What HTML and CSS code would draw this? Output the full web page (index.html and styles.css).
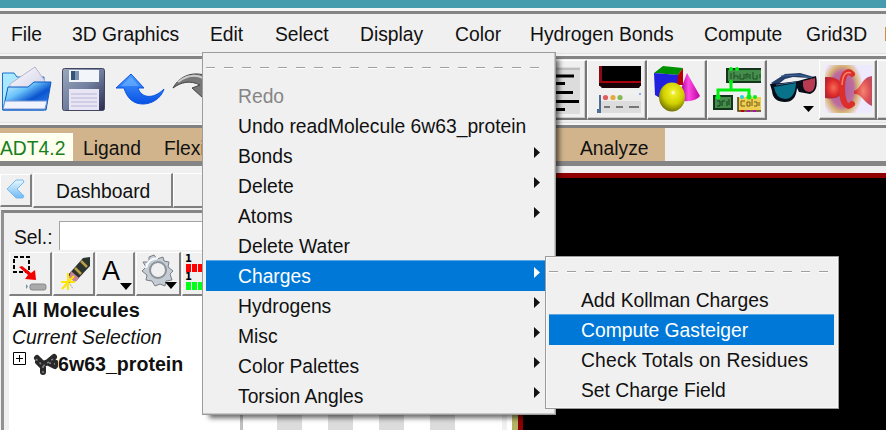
FILE: index.html
```html
<!DOCTYPE html>
<html lang="en">
<head>
<meta charset="utf-8">
<title>AutoDockTools</title>
<link rel="stylesheet" href="styles.css">
</head>
<body>
<div class="app">
  <div class="titlebar"></div>
  <nav class="menubar">
    <span>File</span><span>3D Graphics</span><span>Edit</span><span>Select</span><span>Display</span><span>Color</span><span>Hydrogen Bonds</span><span>Compute</span><span>Grid3D</span><span>Help</span>
  </nav>
  <div class="toolbar">
    <div class="tool flat">
      <svg width="58" height="60" viewBox="0 0 58 60">
        <defs>
          <linearGradient id="fold" x1="0" y1="0" x2="1" y2="1"><stop offset="0" stop-color="#dff8ff"/><stop offset=".35" stop-color="#6cc4fa"/><stop offset=".6" stop-color="#0a55cf"/><stop offset="1" stop-color="#3e94f5"/></linearGradient>
          <linearGradient id="paper" x1="0" y1="0" x2="1" y2="1"><stop offset="0" stop-color="#fff"/><stop offset="1" stop-color="#c9c9e4"/></linearGradient>
        </defs>
        <path d="M2.500 13H14L17 17H44V50H2.500Z" fill="#a9e8ff" stroke="#1772ce"/>
        <path d="M10 24L35 7L47 24L43 34H10Z" fill="url(#paper)" stroke="#b5b5cd"/>
        <path d="M8 27H28L34 22H51L46 50H3Z" fill="url(#fold)" stroke="#0a58c4"/>
        <path d="M5 41H47L45 49H3Z" fill="#f1f4ff" stroke="#7894cf"/>
      </svg>
    </div>
    <div class="tool flat">
      <svg width="56" height="60" viewBox="58 0 56 60">
        <defs><linearGradient id="disk" x1="0" y1="0" x2="1" y2="1"><stop offset="0" stop-color="#9ba8bd"/><stop offset=".5" stop-color="#7180a0"/><stop offset="1" stop-color="#2b294d"/></linearGradient></defs>
        <rect x="62.500" y="8.500" width="42" height="42" rx="2" fill="url(#disk)" stroke="#44465f"/>
        <path d="M69 10H99V22H69Z" fill="#f2f5fa"/><path d="M71 11H79V20H71Z" fill="#35547c"/><path d="M75 11H79V20H75Z" fill="#7c92ad"/>
        <path d="M69 29H99V50H69Z" fill="#e8e5f5"/><path d="M71 34H97M71 38H97M71 42H97M71 46H97" stroke="#b9b5d5"/>
      </svg>
    </div>
    <div class="tool flat">
      <svg width="56" height="60" viewBox="114 0 56 60">
        <defs><linearGradient id="undo" x1="0" y1="0" x2="0" y2="1"><stop offset="0" stop-color="#4c9dff"/><stop offset="1" stop-color="#0751e6"/></linearGradient></defs>
        <path d="M131 14L144 28H138C141 38 153 40 164 29C161 39 151 44 143 44C133 44 127 38 124 28H116Z" fill="url(#undo)" stroke="#0a55df"/>
        <path d="M131 17L139 26H121Z" fill="#73b8ff" opacity=".6"/>
      </svg>
    </div>
    <div class="tool flat">
      <svg width="56" height="60" viewBox="170 0 56 60">
        <path d="M173 28C180 15 194 11 207 16V10L220 28L207 44V38H203L192 28L200 25C190 20 181 22 173 28Z" fill="#777" stroke="#444"/>
        <path d="M178 22C186 16 195 14 203 18" fill="none" stroke="#ccc" stroke-width="2"/>
      </svg>
    </div>
    <div class="tool">
      <svg class="right" width="57" height="56" viewBox="530 2 57 56">
        <path d="M538 8H581V55H538Z" fill="#dcdcdc"/><path d="M538 10H581" stroke="#a0a0a0"/>
        <path d="M550 17H575M550 24.500H566M550 33.500H574M550 42.500H580M550 50.500H566" stroke="#000" stroke-width="3"/>
      </svg>
    </div>
    <div class="tool">
      <svg width="57" height="56" viewBox="588 2 57 56">
        <path d="M599 7H641V27H599Z" fill="#8d0a12"/><path d="M602 7H641V22H602Z" fill="#000"/><path d="M599 24H641V26L639 29H602L599 26Z" fill="#180007"/><path d="M602 23H641" stroke="#b0000c" stroke-width="1.500"/>
        <path d="M600 36H641V54H600Z" fill="#dcdcdc"/><path d="M600 36H641V42H600Z" fill="#eee"/><path d="M600 36V54M598 50V54" stroke="#174778" stroke-width="1.500"/>
        <circle cx="605.500" cy="38.500" r="2.600" fill="#df605b"/><circle cx="613" cy="38.500" r="2.600" fill="#e5a93e"/><circle cx="620" cy="38.500" r="2.600" fill="#83b956"/>
        <path d="M604 48H610M616 48H623M629 48H639" stroke="#777" stroke-width="2"/><path d="M640 34V36" stroke="#2871bd"/>
      </svg>
    </div>
    <div class="tool">
      <svg width="57" height="56" viewBox="648 2 57 56">
        <defs>
          <radialGradient id="ball" cx=".55" cy=".35" r=".65"><stop offset="0" stop-color="#fff"/><stop offset=".15" stop-color="#eded26"/><stop offset=".6" stop-color="#cfcf00"/><stop offset="1" stop-color="#747300"/></radialGradient>
          <linearGradient id="cone"><stop offset="0" stop-color="#a40090"/><stop offset=".4" stop-color="#ff4be5"/><stop offset="1" stop-color="#bd009c"/></linearGradient>
        </defs>
        <path d="M654 14L663 7L683 9L678 16Z" fill="#009100"/><path d="M654 14L679 16V39H660L655 36Z" fill="#2020df"/><path d="M678 16L683 9V26H677Z" fill="#b80000"/>
        <path d="M687 14L700 37Q696 43 683 42L681 30Z" fill="url(#cone)"/><ellipse cx="672" cy="38" rx="13" ry="14.500" fill="url(#ball)"/>
      </svg>
    </div>
    <div class="tool">
      <svg width="57" height="56" viewBox="708 2 57 56">
        <path d="M727 10H761V23H727Z" fill="#458d4b"/><path d="M761 10H727V23H761" fill="none" stroke="#12351b" stroke-width="2"/><path d="M731 14V20M734 13V20M734 17H738V20M740 15V20H744V15M746 20V15H748V19M750 15V20M753 13V20H757V16M760 15V19" fill="none" stroke="#153d1f" stroke-width=".8"/>
        <path d="M731 22V30M718 38V31H749V37" fill="none" stroke="#00ed10" stroke-width="3"/>
        <path d="M714 37H732V50H714Z" fill="#458d4b" stroke="#12351b" stroke-width="2"/><path d="M717 42H720V47H717M722 47V42H725M727 42V47M729 40V46" fill="none" stroke="#163c20"/>
        <path d="M738 38H761V52H738Z" fill="#efcd51"/><path d="M738 38V52H761" fill="none" stroke="#4a3e16" stroke-width="1.500"/><path d="M745 42H741V47H745M747 43H750V47H747ZM752 40V47M754 43H757V47H754M759 47V43" fill="none" stroke="#715c18"/>
        <g fill="#00ee19"><circle cx="731" cy="10" r="2"/><circle cx="737" cy="10" r="2"/><circle cx="731" cy="23" r="2"/><circle cx="718" cy="38" r="2.500"/><circle cx="749" cy="38" r="2.500"/><circle cx="755" cy="38" r="2"/></g><circle cx="742" cy="38" r="2" fill="#20d2dc"/><path d="M741 52H744" stroke="#c40000" stroke-width="2"/><path d="M747 52H750M753 52H756" stroke="#b10cb9" stroke-width="2"/>
      </svg>
    </div>
    <div class="tool flat">
      <svg width="52" height="60" viewBox="767 0 52 60">
        <path d="M771 23L785 14L800 13L814 17L816 21L809 18L793 17L785 19L776 26Z" fill="#263f68"/>
        <path d="M770 24Q785 23 798 21L816 16Q819 31 810 34L799 32L797 28Q796 42 785 42Q773 42 772 31Z" fill="#050d18"/>
        <path d="M774 27L796 23Q795 39 785 39Q776 39 774 27Z" fill="#08728b"/><path d="M803 21L815 18Q816 32 809 32Q802 32 803 21Z" fill="#b83a50"/>
        <path d="M776 25L796 22M781 16L799 15L812 18" fill="none" stroke="#3e669b"/><path d="M803 46H814L808.500 52Z"/>
      </svg>
    </div>
    <div class="tool">
      <svg width="55" height="56" viewBox="820 2 55 56">
        <defs>
          <radialGradient id="blob"><stop offset="0" stop-color="#f56c58"/><stop offset=".7" stop-color="#df2d2a"/><stop offset="1" stop-color="#b92536"/></radialGradient>
          <radialGradient id="halo"><stop offset="0" stop-color="#a65da4"/><stop offset=".55" stop-color="#bd6c9c"/><stop offset=".75" stop-color="#d7b477"/><stop offset="1" stop-color="#eee2fa"/></radialGradient>
        </defs>
        <svg x="825" y="6" width="47" height="48" viewBox="825 6 47 48">
          <path d="M825 6H872V54H825Z" fill="#edeaff"/><ellipse cx="842" cy="30" rx="21" ry="31" fill="url(#halo)"/>
          <path d="M825 18Q842 17 842 30Q842 42 825 39Z" fill="url(#blob)"/><path d="M854 32C862 29 861 19 872 17V47C863 43 861 34 854 35Z" fill="url(#blob)" opacity=".8"/>
          <path d="M852 15C846 9 842 18 842 29C842 42 846 51 852 45" fill="none" stroke="#dc2e2b" stroke-width="6" stroke-linecap="round"/><path d="M851 14Q843 11 842 26" fill="none" stroke="#fa806e" stroke-width="1.500"/>
        </svg>
      </svg>
    </div>
    <div class="tool"></div>
  </div>
  <div class="tabbar"><span class="active">ADT4.2</span><span>Ligand</span><span>Flexible</span><span>Analyze</span></div>
  <main class="workspace">
    <aside class="dashboard">
      <div class="dash-tabs">
        <span class="bevel"><svg width="24" height="28" viewBox="0 0 24 28"><defs><linearGradient id="chev" x1="0" y1="0" x2="0" y2="1"><stop offset="0" stop-color="#e7f7ff"/><stop offset="1" stop-color="#70baf5"/></linearGradient></defs><path d="M3 13L12 4H19L20 6L13 13L20 20L19 22H12Z" fill="url(#chev)" stroke="#78b8eb" stroke-linejoin="round"/></svg></span>
        <span class="bevel">Dashboard</span><span class="bevel"></span>
      </div>
      <div class="panel">
        <label class="select-row">Sel.:<span class="entry"></span></label>
        <div class="panel-tools">
          <span class="bevel"><svg width="40" height="40" viewBox="0 0 40 40"><rect x="4" y="4" width="15" height="15" fill="none" stroke="#000" stroke-width="2" stroke-dasharray="4 2"/><path d="M12 13L21 20L25 17L26 27L15 26L18 22L9 14Z" fill="#f20000"/><rect x="20" y="31" width="16" height="6" rx="2" fill="#aaa" stroke="#888"/><path d="M16 31V36L18 33.500Z" fill="#6695a7"/></svg></span>
          <span class="bevel"><svg width="38" height="40" viewBox="0 0 38 40"><path d="M14 22L29 5L36 4V13L22 28Z" fill="#29342e"/><path d="M21 15L27 21M27 8L33 14" stroke="#be9c45" stroke-width="2.500"/><path d="M17 18L25 25L21 29L15 25Z" fill="#c9839a"/><path d="M14 20V37M7 29H21M8 36L20 23" stroke="#ffe600" stroke-width="2"/><path d="M15 29L19 36" stroke="#888" stroke-dasharray="1 1"/></svg></span>
          <span class="bevel"><svg width="35" height="40" viewBox="0 0 35 40"><text class="tool-letter" x="5" y="27">A</text><path d="M23 30H35L29 37Z"/></svg></span>
          <span class="bevel"><svg width="41" height="40" viewBox="0 0 41 40"><path d="M17 2L20 6L26 4L27 8L32 9L31 14L36 18L33 21L35 27L29 28L28 33L23 31L18 33L15 28L9 27L10 22L5 18L9 14L6 9L12 9L12 4Z" fill="#c5ccd4" stroke="#777f87"/><ellipse cx="21" cy="17" rx="8" ry="8" fill="#f0f0f0" stroke="#8a929a" stroke-width="2"/><path d="M9 15Q10 6 21 5" stroke="#f9fbff" stroke-width="2" fill="none"/><path d="M28 29H40L34 36Z"/></svg></span>
          <span class="bevel"><svg width="40" height="40" viewBox="0 0 40 40"><g class="tiny"><text x="2" y="9">1</text><text x="2" y="27">1</text></g><path d="M3 15H40" stroke="red" stroke-width="8" stroke-dasharray="5 1"/><path d="M3 33H40" stroke="#00ff19" stroke-width="8" stroke-dasharray="5 1"/></svg></span>
        </div>
        <div class="tree">
          <div class="all">All Molecules</div><div class="current">Current Selection</div>
          <div class="molecule"><svg width="46" height="27" viewBox="0 0 46 27"><path d="M1.500 1.500H13.500V13.500H1.500Z" fill="#fff" stroke="#000"/><path d="M4 7.500H11M7.500 4V11" stroke="#000"/><path d="M25 7L31 13L39 10L44 12M26 11L31 16V21M36 11L42 6M37 12L43 15" fill="none" stroke="#292929" stroke-width="6" stroke-linecap="round"/><path d="M24 8L31 15L41 8M31 15V22M37 12L43 13" fill="none" stroke="#888" stroke-width="1.500" stroke-dasharray="2 3"/></svg><span>6w63_protein</span></div>
        </div>
      </div>
    </aside>
    <div class="columns"></div>
    <div class="viewer"></div>
  </main>
</div>
<div class="menu edit-menu">
  <div class="tear"></div>
  <div class="item disabled">Redo</div><div class="item">Undo readMolecule 6w63_protein</div><div class="item sub">Bonds</div><div class="item sub">Delete</div><div class="item sub">Atoms</div><div class="item">Delete Water</div><div class="item sub selected">Charges</div><div class="item sub">Hydrogens</div><div class="item sub">Misc</div><div class="item sub">Color Palettes</div><div class="item sub">Torsion Angles</div>
</div>
<div class="menu charges-menu">
  <div class="tear"></div>
  <div class="item">Add Kollman Charges</div><div class="item selected">Compute Gasteiger</div><div class="item wide">Check Totals on Residues</div><div class="item">Set Charge Field</div>
</div>
</body>
</html>
```
FILE: styles.css
```css
* { box-sizing: border-box; }
body { margin: 0; width: 886px; height: 430px; overflow: hidden; background: #f0f0f0; color: #111; font: 19.3px/30px "Liberation Sans", Arial, sans-serif; white-space: nowrap; }
svg { display: block; flex-shrink: 0; }
.app { width: 886px; height: 430px; display: flex; flex-direction: column; overflow: hidden; }
.titlebar { height: 11px; flex-shrink: 0; background: #469bad; border-bottom: 3px solid #f5f5f5; }
.menubar { height: 48px; flex-shrink: 0; display: grid; grid-template-columns: 61px 138px 65px 85px 95px 75px 174px 102px 78px 60px; padding: 6px 0 0 11px; border-top: 3px solid #858585; border-bottom: 3px solid #858585; background: linear-gradient(#f0f0f0 39px, #e2e2e2 39px, #e2e2e2 40px, #f6f6f6 40px); }
.toolbar { height: 66px; flex-shrink: 0; display: grid; grid-template-columns: 58px 56px 56px 358px 59px 60px 60px 60px 52px 58px 60px; padding-top: 1px; background: linear-gradient(#f0f0f0 63px, #e2e2e2 63px, #e2e2e2 64px, #f6f6f6 64px); }
.tool { height: 60px; overflow: hidden; border: 1px solid #fff; border-right: 2px solid #777; border-bottom: 2px solid #777; box-shadow: inset -1px -1px #ccc; }
.tool.flat { border: 0; box-shadow: none; }
.tabbar { height: 41px; flex-shrink: 0; display: grid; grid-template-columns: 73px 81px 411px 100px; border-top: 3px solid #818181; border-bottom: 5px solid #858585; line-height: 41px; background: linear-gradient(90deg, #d2b48c 665px, #f0f0f0 665px); }
.tabbar span { padding-left: 10px; height: 33px; }
.tabbar span:nth-child(4) { padding-left: 15px; }
.tabbar .active { height: 28px; margin-top: 5px; padding-left: 0; color: #16801c; background: #fffff0; border: solid #fff; border-width: 1px 1px 0 0; line-height: 30px; }
.workspace { flex: 1; min-height: 0; display: grid; grid-template-columns: 240px 272px 374px; padding-top: 7px; }
.dashboard { display: flex; flex-direction: column; min-width: 0; }
.dash-tabs { height: 37px; display: grid; grid-template-columns: 33px 140px 67px; }
.bevel { overflow: hidden; border: 1px solid #fff; border-right: 2px solid #808080; border-bottom: 2px solid #808080; background: #f0f0f0; }
.dash-tabs .bevel { height: 35px; padding-left: 22px; line-height: 36px; }
.dash-tabs .bevel:first-child { height: 33px; margin: 1px 1px 0 0; padding: 1px 0 0 3px; }
.panel { flex: 1; min-height: 0; margin-left: 1px; border-left: 3px solid #929292; border-top: 3px solid #858585; padding: 8px 0 0 5px; }
.select-row { height: 31px; display: flex; padding-left: 5px; line-height: 34px; }
.entry { width: 190px; height: 29px; margin-left: 6px; background: #fff; border: solid #a4a4a4; border-width: 1px 0 0 1px; }
.panel-tools { height: 44px; display: grid; grid-template-columns: 44px 43px 40px 46px 58px; }
.panel-tools .bevel { margin-right: 1px; height: 44px; }
.tool-letter { font-size: 27px; }
.tiny { font: bold 10px "DejaVu Sans", sans-serif; }
.tree { height: 140px; background: #fff; padding-left: 3px; line-height: 27px; }
.all { font-weight: bold; font-size: 20px; padding-top: 1px; }
.current { font-style: italic; font-size: 19.4px; }
.molecule { display: flex; font-weight: bold; font-size: 19.6px; }
.columns { border: solid #c0c0c0; border-width: 0 0 0 3px; background: linear-gradient(90deg, transparent 259px, #f0f0f0 259px, #f0f0f0 264px, transparent 264px), repeating-linear-gradient(90deg, #fff 0, #fff 34px, #dcdcdc 34px, #dcdcdc 59px, #fff 59px, #fff 85px, #dcdcdc 85px, #dcdcdc 110px, #fff 110px, #fff 136px, #dcdcdc 136px, #dcdcdc 161px, #fff 161px, #fff 187px, #dcdcdc 187px, #dcdcdc 212px, #fff 212px, #fff 270px); }
.viewer { background: #000; border-top: 5px solid #8f0000; border-left: 6px solid #b2b363; box-shadow: inset 5px 0 #8f0000; }
.menu { position: absolute; background: #f0f0f0; border: 1px solid #9c9c9c; box-shadow: inset 0 0 0 1px #f8f8f8; }
.edit-menu { left: 202px; top: 52px; width: 354px; height: 363px; padding: 14px 5px 0 3px; box-shadow: inset -1px -1px #c8c8c8, 5px 5px 5px -2px #0009; }
.charges-menu { left: 545px; top: 256px; width: 294px; height: 153px; padding: 14px 4px 0 3px; }
.tear { height: 14px; width: 335px; background: repeating-linear-gradient(90deg, #a0a0a0 0 9px, transparent 9px 18px) 0 0 / 100% 1px no-repeat, repeating-linear-gradient(90deg, #fff 0 9px, transparent 9px 18px) 0 1px / 100% 1px no-repeat; }
.charges-menu .tear { width: 280px; }
.item { height: 30px; display: flex; justify-content: space-between; padding: 0 10px 0 32px; line-height: 32px; }
.item.wide { letter-spacing: .2px; }
.disabled { color: #858585; }
.sub::after { content: ""; width: 6px; height: 11px; margin-top: 6px; background: currentColor; clip-path: polygon(0 0, 100% 50%, 0 100%); }
.selected { background: #0078d7; color: #fff; box-shadow: 0 -1px #58a6e3; }
```
